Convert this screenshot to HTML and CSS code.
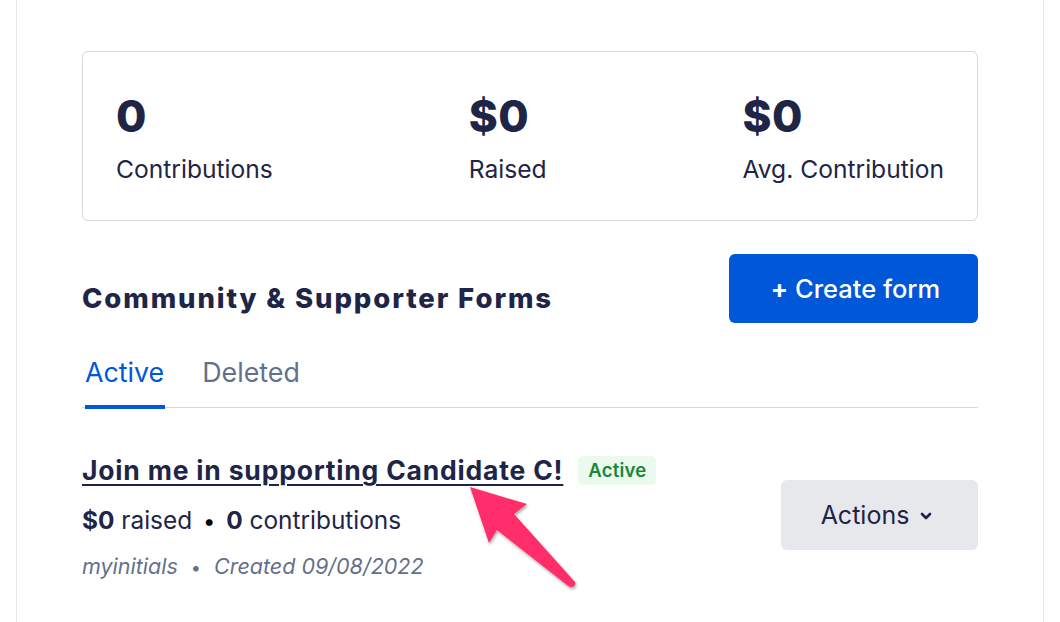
FILE: index.html
```html
<!DOCTYPE html>
<html>
<head>
<meta charset="utf-8">
<link rel="stylesheet" href="styles.css">
</head>
<body>
<div class="page">
  <div class="stats">
    <div class="stat"><div class="num">0</div><div class="label">Contributions</div></div>
    <div class="stat"><div class="num">$0</div><div class="label">Raised</div></div>
    <div class="stat"><div class="num">$0</div><div class="label">Avg. Contribution</div></div>
  </div>
  <div class="head">
    <h2 class="title">Community &amp; Supporter Forms</h2>
    <button class="create"><span class="plus">+</span> Create form</button>
  </div>
  <div class="tabs">
    <div class="tab active">Active</div>
    <div class="tab">Deleted</div>
  </div>
  <div class="row">
    <div class="info">
      <div class="name-line"><a class="name">Join me in supporting Candidate C!</a><span class="badge">Active</span></div>
      <div class="sum"><b>$0</b> raised <span class="dot">•</span> <b>0</b> contributions</div>
      <div class="meta">myinitials <span class="mdot">•</span> Created 09/08/2022</div>
    </div>
    <button class="actions">Actions <svg class="chev" width="12" height="8" viewBox="0 0 12 8"><path d="M2 2 L6 6 L10 2" fill="none" stroke="#1e2546" stroke-width="2.6" stroke-linecap="round" stroke-linejoin="round"/></svg></button>
  </div>
  <svg class="arrow" width="1060" height="622" viewBox="0 0 1060 622">
    <defs>
      <filter id="sh" x="-20%" y="-20%" width="140%" height="140%">
        <feDropShadow dx="1" dy="2" stdDeviation="1.5" flood-color="#000" flood-opacity="0.35"/>
      </filter>
    </defs>
    <path d="M470 487 L527 504 L514 514 L575 582 Q576 587 571 587 Q569 587 567 585 L497 530 L489 543 Z" fill="#ff2d6b" filter="url(#sh)"/>
  </svg>
</div>
</body>
</html>
```
FILE: styles.css
```css
* { box-sizing: border-box; }
html, body { margin: 0; padding: 0; background: #ffffff; }
body { font-family: Inter, "Liberation Sans", sans-serif; color: #1e2546; }
.page {
  position: relative;
  margin: 0 16px;
  height: 622px;
  border-left: 1px solid #e5e7eb;
  border-right: 1px solid #e5e7eb;
  padding: 51px 65px 0 65px;
}
.stats {
  height: 170px;
  border: 1px solid #d4d7de;
  border-radius: 6px;
  display: flex;
  justify-content: space-between;
  padding: 38px 33px 0 33px;
}
.num {
  font-weight: 800;
  font-size: 44px;
  line-height: 52px;
  letter-spacing: 0.5px;
}
.label {
  font-size: 24.6px;
  line-height: 30px;
  margin-top: 12px;
}
.head {
  display: flex;
  justify-content: space-between;
  align-items: flex-end;
  margin-top: 33px;
}
.title {
  margin: 0 0 9px 0;
  font-size: 27.5px;
  line-height: 32px;
  font-weight: 800;
  letter-spacing: 1.9px;
}
.create {
  width: 249px;
  height: 69px;
  border: none;
  border-radius: 6px;
  background: #0057d8;
  color: #fff;
  font-family: Inter, "Liberation Sans", sans-serif;
  font-size: 25.5px;
  font-weight: 500;
  padding: 0 0 0 4px;
}
.plus { font-weight: 700; }
.tabs {
  display: flex;
  gap: 36px;
  margin-top: 33px;
  border-bottom: 1px solid #d4d7de;
}
.tab {
  font-size: 26.8px;
  line-height: 32px;
  color: #64708a;
  padding: 0 1px 17px 1px;
  margin-bottom: -2px;
  border-bottom: 4px solid transparent;
}
.tab.active { color: #0057d8; border-bottom-color: #0057d8; margin-left: 3px; padding: 0 1px 17px 0; }
.row {
  display: flex;
  justify-content: space-between;
  align-items: center;
  margin-top: 46px;
}
.name-line { display: flex; align-items: center; gap: 15px; height: 32px; }
.name {
  font-size: 26.5px;
  font-weight: 700;
  letter-spacing: 0.8px;
  text-decoration: underline;
  text-underline-offset: 4px;
  text-decoration-thickness: 2px;
}
.badge {
  background: #ebf9ef;
  color: #15883a;
  font-size: 18.5px;
  font-weight: 600;
  line-height: 29px;
  padding: 0 10px;
  border-radius: 5px;
  letter-spacing: 0.2px;
}
.sum { font-size: 24.4px; line-height: 32px; margin-top: 18px; }
.sum b { font-weight: 700; }
.dot { color: #000; margin: 0 4px; font-size: 22px; }
.meta { font-size: 21.5px; line-height: 28px; margin-top: 15px; color: #64708a; font-style: italic; }
.mdot { font-style: normal; font-size: 18px; margin: 0 7px; }
.actions {
  width: 197px;
  height: 70px;
  border: none;
  border-radius: 6px;
  background: #e6e8ec;
  color: #1e2546;
  font-family: Inter, "Liberation Sans", sans-serif;
  font-size: 25px;
  padding: 0 6px 0 0;
  display: flex;
  align-items: center;
  justify-content: center;
  gap: 11px;
  margin-bottom: 6px;
}
.chev { margin-top: 2px; }
.arrow { position: absolute; left: -17px; top: 0; pointer-events: none; }
```
